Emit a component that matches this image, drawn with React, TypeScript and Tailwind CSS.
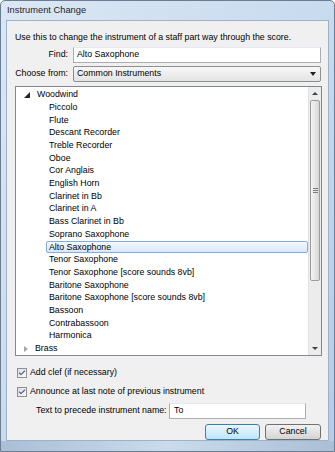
import { Check } from "lucide-react"

const woodwinds = [
    "Piccolo",
    "Flute",
    "Descant Recorder",
    "Treble Recorder",
    "Oboe",
    "Cor Anglais",
    "English Horn",
    "Clarinet in Bb",
    "Clarinet in A",
    "Bass Clarinet in Bb",
    "Soprano Saxophone",
    "Alto Saxophone",
    "Tenor Saxophone",
    "Tenor Saxophone [score sounds 8vb]",
    "Baritone Saxophone",
    "Baritone Saxophone [score sounds 8vb]",
    "Bassoon",
    "Contrabassoon",
    "Harmonica",
]

const font = "font-['Liberation_Sans',Arial,sans-serif]"

const Checkbox = ({ label }: { label: string }) => (
    <div className="flex items-center h-[12px]">
        <div className="ml-[10px] w-[10px] h-[10px] border border-[#8e8f8f] bg-gradient-to-br from-[#dcdcdc] to-[#ffffff] flex items-center justify-center">
            <Check size={8} strokeWidth={3.5} className="text-[#4a5f97]" />
        </div>
        <span className="ml-[3px] whitespace-nowrap">{label}</span>
    </div>
)

const Scrollbar = () => (
    <div className="w-[13px] h-full bg-[#ececec] border-l border-[#e2e2e2] flex flex-col">
        <div className="h-[13px] flex items-center justify-center">
            <div className="w-0 h-0 border-l-[3px] border-r-[3px] border-b-[3px] border-l-transparent border-r-transparent border-b-[#404040]" />
        </div>
        <div className="mx-[1px] h-[181px] rounded-[2px] border border-[#9d9d9d] bg-gradient-to-r from-[#f4f4f4] via-[#e6e6e6] to-[#d6d6d6] flex items-center justify-center">
            <div className="flex flex-col gap-[1px]">
                <div className="w-[5px] h-px bg-[#7a7a7a]" />
                <div className="w-[5px] h-px bg-[#7a7a7a]" />
                <div className="w-[5px] h-px bg-[#7a7a7a]" />
            </div>
        </div>
        <div className="flex-1" />
        <div className="h-[13px] flex items-center justify-center">
            <div className="w-0 h-0 border-l-[3px] border-r-[3px] border-t-[3px] border-l-transparent border-r-transparent border-t-[#404040]" />
        </div>
    </div>
)

const App = () => {
    return (
        <div className={`w-[335px] h-[452px] bg-gradient-to-br from-[#dbe7f4] via-[#c8dbef] to-[#b3cce8] border border-[#6b7d93] rounded-t-[5px] flex flex-col text-[8.8px] text-black ${font}`}>

            <div className="h-[19px] pl-[6px] flex items-center text-[9.3px] text-[#1e1e1e]">Instrument Change</div>

            <div className="mx-[5px] h-[421px] bg-[#f0f0f0] border border-[#9fb1c6] flex flex-col">

                <div className="h-[12px] mt-[11px] pl-[8px] flex items-center whitespace-nowrap">
                    Use this to change the instrument of a staff part way through the score.
                </div>

                <div className="mt-[3px] flex items-center h-[16px]">
                    <span className="w-[66px] text-right pr-[5px] whitespace-nowrap">Find:</span>
                    <div className="w-[248px] h-[16px] bg-white border border-[#abadb3] border-t-[#e3e9ef] flex items-center pl-[3px]">Alto Saxophone</div>
                </div>

                <div className="mt-[3px] flex items-center h-[16px]">
                    <span className="w-[66px] text-right pr-[5px] whitespace-nowrap">Choose from:</span>
                    <div className="w-[248px] h-[16px] rounded-[2px] bg-gradient-to-b from-[#f7f7f7] to-[#e4e4e4] border border-[#8e8f8f] flex items-center pl-[3px] justify-between">
                        <span>Common Instruments</span>
                        <div className="mr-[4px] w-0 h-0 border-l-[3px] border-r-[3px] border-t-[4px] border-l-transparent border-r-transparent border-t-[#202020]" />
                    </div>
                </div>

                <div className="mt-[4px] ml-[8px] w-[307px] h-[274px] bg-white border border-[#828790] flex overflow-hidden">
                    <div className="flex-1 flex flex-col overflow-hidden pt-[1.5px]">
                        <div className="h-[12.7px] flex items-center shrink-0">
                            <div className="ml-[8px] w-0 h-0 border-l-[3px] border-t-[3px] border-l-transparent border-t-transparent border-b-[3px] border-r-[3px] border-b-[#262626] border-r-[#262626]" />
                            <span className="ml-[7px]">Woodwind</span>
                        </div>
                        {woodwinds.map((name) => (
                            <div key={name} className="h-[12.7px] flex items-center shrink-0">
                                {name === "Alto Saxophone" ? (
                                    <div className="ml-[30px] flex-1 h-[12px] rounded-[2px] border border-[#84acdd] bg-gradient-to-b from-[#f2f8ff] to-[#d7e8fc] flex items-center pl-[2px]">{name}</div>
                                ) : (
                                    <span className="ml-[33px] whitespace-nowrap">{name}</span>
                                )}
                            </div>
                        ))}
                        <div className="h-[12.7px] flex items-center shrink-0">
                            <div className="ml-[8px] w-0 h-0 border-t-[3px] border-b-[3px] border-l-[4px] border-t-transparent border-b-transparent border-l-[#a6a6a6]" />
                            <span className="ml-[7px]">Brass</span>
                        </div>
                        <div className="h-[12.7px] flex items-center shrink-0">
                            <div className="ml-[8px] w-0 h-0 border-t-[3px] border-b-[3px] border-l-[4px] border-t-transparent border-b-transparent border-l-[#a6a6a6]" />
                            <span className="ml-[7px] whitespace-nowrap">Percussion and Drums</span>
                        </div>
                    </div>
                    <Scrollbar />
                </div>

                <div className="mt-[11px]">
                    <Checkbox label="Add clef (if necessary)" />
                </div>
                <div className="mt-[7px]">
                    <Checkbox label="Announce at last note of previous instrument" />
                </div>

                <div className="mt-[5px] flex items-center h-[16px]">
                    <span className="ml-[29px] whitespace-nowrap">Text to precede instrument name:</span>
                    <div className="ml-auto mr-[22px] w-[137px] h-[16px] bg-white border border-[#abadb3] border-t-[#e3e9ef] flex items-center pl-[4px]">To</div>
                </div>

                <div className="mt-[5px] flex justify-end gap-[5px] pr-[7px]">
                    <div className="w-[55px] h-[16px] rounded-[3px] border border-[#3c7fb1] bg-gradient-to-b from-[#eaf6fd] to-[#bee6fd] flex items-center justify-center">OK</div>
                    <div className="w-[56px] h-[16px] rounded-[3px] border border-[#707070] bg-gradient-to-b from-[#f2f2f2] to-[#d4d4d4] flex items-center justify-center">Cancel</div>
                </div>

            </div>

            <div className="flex-1 bg-gradient-to-r from-[#a9bfd6] via-[#cbdbec] to-[#a9bfd6]" />

        </div>
    )
}

export default App
